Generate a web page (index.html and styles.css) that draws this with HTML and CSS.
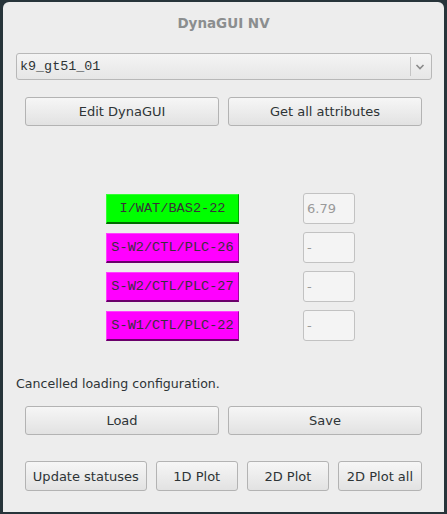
FILE: index.html
```html
<!DOCTYPE html>
<html>
<head>
<meta charset="utf-8">
<link rel="stylesheet" href="styles.css">
</head>
<body>
<div class="window">
  <div class="titlebar">DynaGUI NV</div>
  <div class="content">
    <div class="combo">
      <span class="combo-text">k9_gt51_01</span>
      <span class="combo-sep"></span>
      <svg class="combo-arrow" width="10" height="8" viewBox="0 0 10 8"><path d="M1.5 2 L5 5.5 L8.5 2" fill="none" stroke="#8a8a8a" stroke-width="1.6"/></svg>
    </div>
    <div class="row two top-row">
      <button class="btn">Edit DynaGUI</button>
      <button class="btn">Get all attributes</button>
    </div>
    <div class="devices">
      <div class="device">
        <div class="toggle green">I/WAT/BAS2-22</div>
        <div class="field value">6.79</div>
      </div>
      <div class="device">
        <div class="toggle magenta">S-W2/CTL/PLC-26</div>
        <div class="field">-</div>
      </div>
      <div class="device">
        <div class="toggle magenta">S-W2/CTL/PLC-27</div>
        <div class="field">-</div>
      </div>
      <div class="device">
        <div class="toggle magenta">S-W1/CTL/PLC-22</div>
        <div class="field">-</div>
      </div>
    </div>
    <div class="status">Cancelled loading configuration.</div>
    <div class="row two load-row">
      <button class="btn">Load</button>
      <button class="btn">Save</button>
    </div>
    <div class="row four bottom-row">
      <button class="btn b-update">Update statuses</button>
      <button class="btn b-plot">1D Plot</button>
      <button class="btn b-plot">2D Plot</button>
      <button class="btn b-all">2D Plot all</button>
    </div>
  </div>
</div>
</body>
</html>
```

FILE: styles.css
```css
html, body {
  margin: 0;
  padding: 0;
}
body {
  background: #27343a;
  width: 447px;
  height: 514px;
  overflow: hidden;
  font-family: "DejaVu Sans", sans-serif;
  font-size: 13px;
  color: #2e3436;
}
.window {
  margin: 2px 3px 0 3px;
  width: 441px;
  height: 510px;
  background: #ededed;
  border-radius: 6px 6px 0 0;
  box-sizing: border-box;
  display: flex;
  flex-direction: column;
}
.titlebar {
  height: 40px;
  line-height: 42px;
  text-align: center;
  font-weight: bold;
  color: #8b8e8f;
  font-size: 13.5px;
}
.content {
  padding: 0 12px 0 13px;
  display: flex;
  flex-direction: column;
}
.combo {
  margin-top: 11px;
  height: 27px;
  box-sizing: border-box;
  border: 1px solid #b8b8b8;
  border-radius: 3px;
  background: linear-gradient(#f4f4f4, #e6e6e6);
  display: flex;
  align-items: center;
  padding-left: 3px;
}
.combo-text {
  flex: 1;
  font-family: "Liberation Mono", monospace;
  font-size: 13.4px;
  color: #2e3436;
}
.combo-sep {
  width: 1px;
  height: 19px;
  background: #c4c4c4;
  margin-right: 4px;
}
.combo-arrow {
  margin-right: 6px;
}
.row {
  display: flex;
  gap: 9px;
  padding: 0 10px 0 9px;
}
.btn {
  box-sizing: border-box;
  height: 29px;
  border: 1px solid #b3b3b3;
  border-radius: 3px;
  background: linear-gradient(#f6f6f6, #e2e2e2);
  font-family: "DejaVu Sans", sans-serif;
  font-size: 13px;
  color: #2e3436;
  padding: 0;
  margin: 0;
}
.two .btn {
  flex: 1;
}
.top-row {
  margin-top: 17px;
}
.devices {
  margin-top: 67px;
  display: flex;
  flex-direction: column;
  gap: 8px;
  padding-left: 90px;
}
.device {
  display: flex;
  align-items: flex-start;
  height: 31px;
}
.toggle {
  margin-top: 1px;
  width: 133px;
  height: 30px;
  box-sizing: border-box;
  font-family: "Liberation Mono", monospace;
  font-size: 13.6px;
  color: #3a2f3a;
  display: flex;
  align-items: center;
  justify-content: center;
  border-style: solid;
  border-width: 1px 1px 2px 1px;
}
.green {
  background: #00ff00;
  border-color: #33ff33 #00a400 #006a00 #33ff33;
}
.magenta {
  background: #ff00ff;
  border-color: #ff40ff #a000a0 #6a006a #ff40ff;
}
.field {
  margin-left: 64px;
  width: 52px;
  height: 31px;
  box-sizing: border-box;
  border: 1px solid #c2c2c2;
  border-radius: 3px;
  background: #f4f4f4;
  color: #9a9a9a;
  font-size: 13px;
  line-height: 29px;
  padding-left: 3px;
}
.status {
  margin-top: 34px;
  height: 16px;
  line-height: 18px;
  font-size: 12.6px;
  color: #2e3436;
}
.load-row {
  margin-top: 15px;
}
.bottom-row {
  margin-top: 26px;
}
.four .btn {
  height: 30px;
}
.b-update { width: 123px; }
.b-plot { width: 83px; }
.b-all { width: 85px; }
```
